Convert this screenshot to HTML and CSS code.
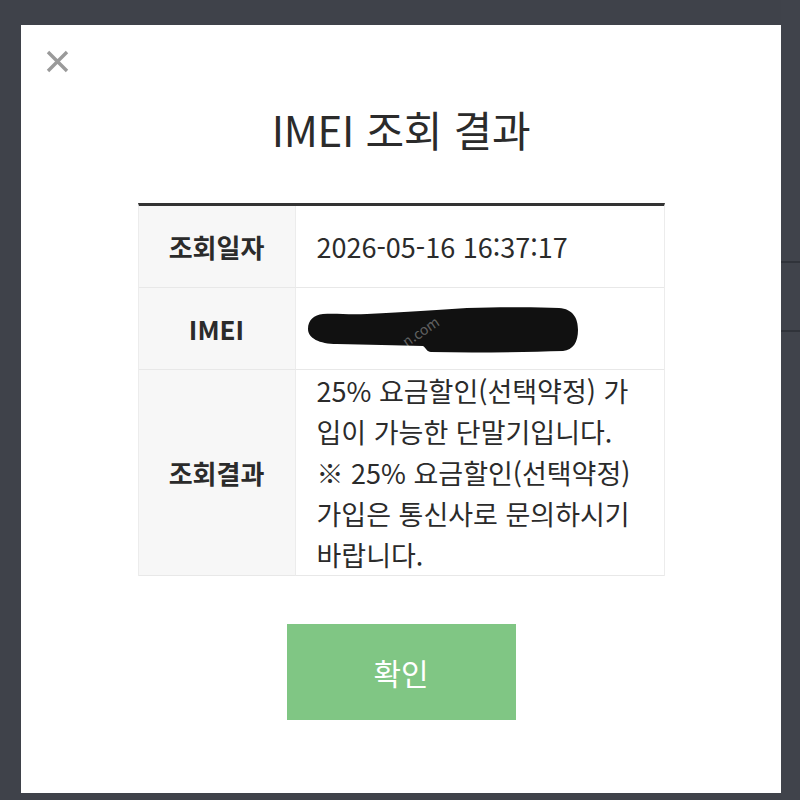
FILE: index.html
```html
<!DOCTYPE html>
<html lang="ko">
<head>
<meta charset="utf-8">
<title>IMEI 조회 결과</title>
<link rel="stylesheet" href="styles.css">
</head>
<body>
<div class="backdrop">
  <div class="side-lines"><span class="side-line l1"></span><span class="side-line l2"></span></div>
  <div class="modal">
    <button class="close" aria-label="닫기">
      <svg viewBox="0 0 23 23" width="23" height="23"><path d="M2 2 L21 21 M21 2 L2 21" stroke="#9a9a9a" stroke-width="3.4" stroke-linecap="butt" fill="none"/></svg>
    </button>
    <h1 class="title">IMEI 조회 결과</h1>
    <div class="table">
      <div class="th row1">조회일자</div>
      <div class="td row1">2026-05-16 16:37:17</div>
      <div class="th row2">IMEI</div>
      <div class="td row2 imei">
        <svg class="scribble" viewBox="0 0 274 52" width="274" height="52">
          <path d="M1 25 C1 16 7 11 16 10 C30 9 40 11 60 10 C100 8 130 6 160 4 C200 3 230 3 252 4 C266 5 271 14 271 26 C271 38 266 46 256 47 C220 48 170 49 124 48 C120 48 119 44 116 42 C90 41 60 41 30 40 C12 40 1 34 1 25 Z" fill="#111"/>
        </svg>
        <span class="watermark">n.com</span>
      </div>
      <div class="th row3">조회결과</div>
      <div class="td row3 result">
        <p>25% 요금할인(선택약정) 가입이 가능한 단말기입니다.</p>
        <p>※ 25% 요금할인(선택약정) 가입은 통신사로 문의하시기 바랍니다.</p>
      </div>
    </div>
    <button class="confirm">확인</button>
  </div>
</div>
</body>
</html>
```

FILE: styles.css
```css
* { box-sizing: border-box; }
html, body {
  margin: 0;
  padding: 0;
  background: #3f424a;
}
body {
  font-family: "Noto Sans CJK KR", "Noto Sans", sans-serif;
  color: #2b2b2b;
}
.backdrop {
  position: relative;
  width: 800px;
  height: 800px;
  padding: 25px 0 0 21px;
  overflow: hidden;
}
.side-lines {
  position: absolute;
  right: 0;
  top: 0;
  width: 19px;
  height: 800px;
  background: #40434b;
}
.side-line {
  position: absolute;
  left: 0;
  right: 0;
  height: 2px;
  background: #30333a;
}
.l1 { top: 261px; }
.l2 { top: 330px; }
.modal {
  position: relative;
  width: 760px;
  height: 768px;
  background: #ffffff;
  padding-top: 25px;
}
.close {
  display: block;
  margin: 0 0 0 25px;
  padding: 0;
  width: 23px;
  height: 23px;
  border: 0;
  background: none;
}
.close svg { display: block; }
.title {
  margin: 26px 0 0;
  font-size: 42px;
  line-height: 60px;
  font-weight: 400;
  text-align: center;
  color: #2b2b2b;
  letter-spacing: -0.3px;
}
.table {
  width: 527px;
  margin: 44px auto 0;
  border-top: 3px solid #333333;
  display: grid;
  grid-template-columns: 157px 1fr;
  border-left: 1px solid #ececec;
  border-right: 1px solid #ececec;
}
.th, .td {
  border-bottom: 1px solid #e8e8e8;
  display: flex;
  align-items: center;
}
.th {
  background: #f7f7f7;
  justify-content: center;
  font-size: 26px;
  font-weight: 700;
  border-right: 1px solid #ececec;
  color: #2b2b2b;
}
.td {
  padding: 0 24px 0 21px;
  font-size: 27px;
  font-weight: 400;
  color: #2b2b2b;
}
.row1, .row2 { height: 82px; }
.imei { position: relative; padding-left: 11px; }
.scribble { display: block; margin-top: 3px; }
.watermark {
  position: absolute;
  left: 104px;
  top: 33px;
  font-size: 14px;
  color: rgba(255,255,255,0.35);
  transform: rotate(-34deg);
}
.result {
  display: block;
  line-height: 41px;
  padding-top: 0;
  padding-bottom: 0;
}
.result p { margin: 0; }
.confirm {
  display: block;
  margin: 48px auto 0;
  width: 229px;
  height: 96px;
  border: 0;
  background: #80c684;
  color: #ffffff;
  font-family: "Noto Sans CJK KR", "Noto Sans", sans-serif;
  font-size: 30px;
  font-weight: 400;
}
```
